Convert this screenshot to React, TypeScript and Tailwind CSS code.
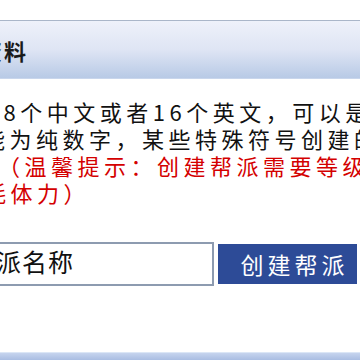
import React from 'react';

const App: React.FC = () => {
  return (
    <div className="w-[360px] h-[360px] overflow-hidden bg-white flex flex-col font-['Noto_Sans_CJK_SC',sans-serif] text-[#111]">
      {/* 标题栏 */}
      <div className="mt-[20px] h-[59px] border-t border-[#aab6c9] border-b border-b-[#c9d6ec] bg-gradient-to-b from-[#eef1fa] via-[#dfe5f4] to-[#b8cae6] flex items-center">
        <span className="-ml-[68px] whitespace-nowrap text-[22px] font-bold tracking-[2px] text-[#1a1a1a] leading-none">
          帮派资料
        </span>
      </div>

      {/* 说明文字 */}
      <div className="mt-[19px] text-[22px] leading-[27px] whitespace-nowrap tracking-[4.5px]">
        <div className="-ml-[23px]">过8个中文或者16个英文，可以是中文</div>
        <div className="-ml-[17px]">能为纯数字，某些特殊符号创建的时候会被过滤</div>
        <div className="-ml-[2px] text-[#d40000]">（温馨提示：创建帮派需要等级达到</div>
        <div className="-ml-[16px] text-[#d40000]">耗体力）</div>
      </div>

      {/* 输入 + 按钮 */}
      <div className="mt-[36px] h-[44px] flex items-center">
        <div className="-ml-[40px] w-[254px] h-[44px] shrink-0 border-2 border-[#8d9bb0] bg-white flex items-center">
          <span className="ml-[8px] text-[25px] tracking-[1px] leading-none -mt-[6px] whitespace-nowrap">
            帮派名称
          </span>
        </div>
        <button className="ml-[4px] w-[139px] h-[40px] shrink-0 bg-[#2d4b97] text-white text-[23px] tracking-[4px] leading-none flex items-center justify-center pl-[14px]">
          创建帮派
        </button>
      </div>

      {/* 底部线 */}
      <div className="mt-auto h-[8px] border-t border-[#dbe6f6] bg-gradient-to-b from-[#c6d4ee] to-[#a9bde2]" />
    </div>
  );
};

export default App;
